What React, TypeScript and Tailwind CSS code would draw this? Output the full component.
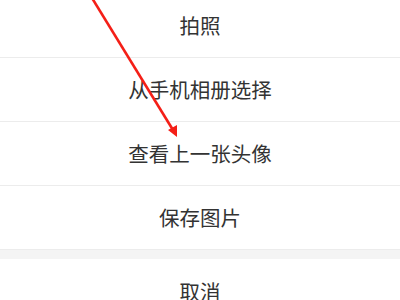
import React from 'react';

const items = ['拍照', '从手机相册选择', '查看上一张头像', '保存图片'];

export default function App() {
    return (
        <div
            className="relative w-[400px] h-[300px] overflow-hidden bg-white"
            style={{ fontFamily: '"Noto Sans CJK SC", "Noto Sans", sans-serif' }}
        >
            <div className="flex flex-col -mt-[6px]">
                {items.map((label) => (
                    <div
                        key={label}
                        className="h-[64px] flex items-center justify-center border-b border-[#ececec] text-[20.5px] text-[#333333]"
                    >
                        {label}
                    </div>
                ))}
                <div className="h-[9px] bg-[#f4f4f4]" />
                <div className="h-[64px] flex items-center justify-center text-[20.5px] text-[#333333]">
                    取消
                </div>
            </div>

            {/* red annotation arrow */}
            <svg className="absolute inset-0 pointer-events-none" width="400" height="300" viewBox="0 0 400 300">
                <line x1="92" y1="-2" x2="173" y2="130" stroke="#f41f17" strokeWidth="2.6" />
                <polygon points="177,137 168,130 177,125" fill="#f41f17" />
            </svg>
        </div>
    );
}
